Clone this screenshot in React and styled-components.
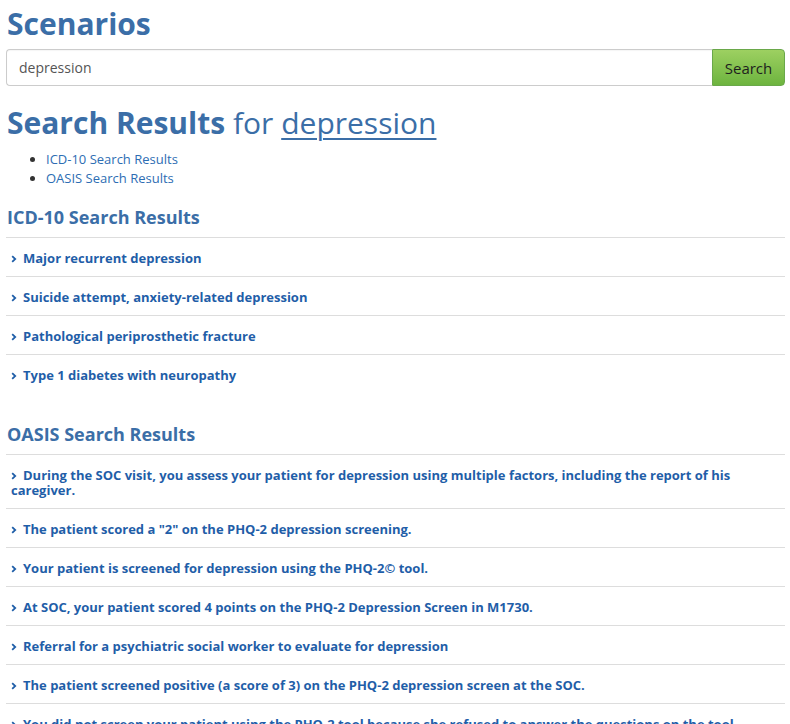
import React from 'react'
import styled, { createGlobalStyle } from 'styled-components'

const icdResults = [
  'Major recurrent depression',
  'Suicide attempt, anxiety-related depression',
  'Pathological periprosthetic fracture',
  'Type 1 diabetes with neuropathy',
]

const oasisResults = [
  'During the SOC visit, you assess your patient for depression using multiple factors, including the report of his caregiver.',
  'The patient scored a "2" on the PHQ-2 depression screening.',
  'Your patient is screened for depression using the PHQ-2© tool.',
  'At SOC, your patient scored 4 points on the PHQ-2 Depression Screen in M1730.',
  'Referral for a psychiatric social worker to evaluate for depression',
  'The patient screened positive (a score of 3) on the PHQ-2 depression screen at the SOC.',
  'You did not screen your patient using the PHQ-2 tool because she refused to answer the questions on the tool.',
]

function Chevron() {
  return (
    <ChevronIcon viewBox="0 0 6 8" width="6" height="8">
      <polyline points="1.2,1.2 4.2,4 1.2,6.8" fill="none" stroke="currentColor" strokeWidth="1.8" />
    </ChevronIcon>
  )
}

function ResultSection({ id, title, items }) {
  return (
    <Section id={id}>
      <SectionTitle>{title}</SectionTitle>
      <ResultList>
        {items.map((item) => (
          <ResultRow key={item}>
            <ResultLink href="#">
              <Chevron />
              {item}
            </ResultLink>
          </ResultRow>
        ))}
      </ResultList>
    </Section>
  )
}

function App() {
  return (
    <Page>
      <GlobalStyle />
      <Title>Scenarios</Title>

      <SearchForm onSubmit={(e) => e.preventDefault()}>
        <SearchInput defaultValue="depression" />
        <SearchButton type="submit">Search</SearchButton>
      </SearchForm>

      <ResultsHeading>
        <strong>Search Results</strong> for <QueryLink href="#">depression</QueryLink>
      </ResultsHeading>

      <Toc>
        <li><TocLink href="#icd">ICD-10 Search Results</TocLink></li>
        <li><TocLink href="#oasis">OASIS Search Results</TocLink></li>
      </Toc>

      <ResultSection id="icd" title="ICD-10 Search Results" items={icdResults} />
      <ResultSection id="oasis" title="OASIS Search Results" items={oasisResults} />
    </Page>
  )
}

export default App

const GlobalStyle = createGlobalStyle`
  html, body {
    margin: 0;
    padding: 0;
    background: #fff;
    font-family: "Open Sans", "Noto Sans", sans-serif;
    color: #333;
  }
`

const Page = styled.div`
  padding: 0 5px 0 6px;
`

const Title = styled.h1`
  margin: 0;
  padding-top: 5px;
  font-size: 30px;
  line-height: 38px;
  font-weight: 700;
  color: #3b6ea7;
  padding-left: 1px;
`

const SearchForm = styled.form`
  display: flex;
  margin-top: 6px;
  height: 37px;
`

const SearchInput = styled.input`
  flex: 1;
  min-width: 0;
  box-sizing: border-box;
  height: 37px;
  border: 1px solid #cccccc;
  border-right: none;
  border-radius: 4px 0 0 4px;
  padding: 0 12px;
  font-family: inherit;
  font-size: 14px;
  color: #555;
  outline: none;
  box-shadow: inset 0 1px 1px rgba(0, 0, 0, 0.04);
`

const SearchButton = styled.button`
  width: 73px;
  height: 37px;
  box-sizing: border-box;
  border: 1px solid #6aa84a;
  border-radius: 0 4px 4px 0;
  background: linear-gradient(#9dd061, #6db43f);
  font-family: inherit;
  font-size: 15px;
  color: #1e1e1e;
  padding: 0;
  cursor: pointer;
`

const ResultsHeading = styled.h2`
  margin: 17px 0 0;
  padding-left: 1px;
  font-size: 30px;
  line-height: 40px;
  font-weight: 400;
  color: #3b6ea7;

  strong {
    font-weight: 700;
  }
`

const QueryLink = styled.a`
  color: #3b6ea7;
  text-decoration: underline;
  text-decoration-thickness: 2px;
  text-underline-offset: 4px;
`

const Toc = styled.ul`
  margin: 7px 0 0;
  padding-left: 40px;
  font-size: 13px;
  line-height: 19px;
  color: #333;
`

const TocLink = styled.a`
  color: #2d6db3;
  text-decoration: none;
`

const Section = styled.section`
  margin-top: 17px;

  & + & {
    margin-top: 29px;
  }
`

const SectionTitle = styled.h3`
  margin: 0;
  padding: 0 0 8px 1px;
  font-size: 18px;
  line-height: 24px;
  font-weight: 700;
  color: #3b6ea7;
  border-bottom: 1px solid #dddddd;
`

const ResultList = styled.ul`
  list-style: none;
  margin: 0;
  padding: 0;
`

const ResultRow = styled.li`
  padding: 13px 40px 10px 5px;
  font-size: 13px;
  line-height: 15px;
  border-top: 1px solid #dddddd;

  &:first-child {
    border-top: none;
  }
`

const ResultLink = styled.a`
  font-weight: 700;
  color: #1f5ea8;
  text-decoration: none;
`

const ChevronIcon = styled.svg`
  display: inline-block;
  margin: 0 6px 0 0;
  vertical-align: middle;
  position: relative;
  top: -1px;
  color: #1f5ea8;
`
